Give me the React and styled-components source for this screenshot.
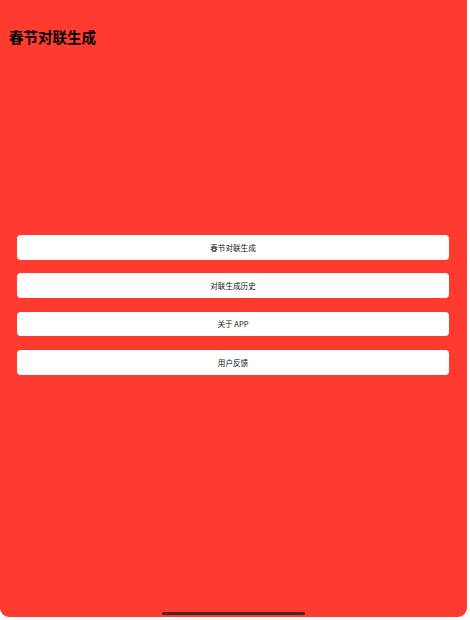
import React from 'react';
import styled, { createGlobalStyle } from 'styled-components';

const GlobalStyle = createGlobalStyle`
  html, body {
    margin: 0;
    padding: 0;
    background: #ffffff;
  }
  body {
    font-family: "Noto Sans CJK SC", "Liberation Sans", sans-serif;
  }
`

const Screen = styled.div`
  position: relative;
  width: 467px;
  height: 617px;
  box-sizing: border-box;
  padding: 30px 18px 0 17px;
  background: #ff3b30;
  border-radius: 0 0 9px 9px;
  overflow: hidden;
`

const Title = styled.h1`
  margin: 0 0 0 -8px;
  font-size: 14.5px;
  line-height: 14.5px;
  font-weight: 700;
  color: #000;
`

const Menu = styled.div`
  display: flex;
  flex-direction: column;
  gap: 13.5px;
  margin-top: 190.5px;
`

const MenuButton = styled.button`
  display: flex;
  align-items: center;
  justify-content: center;
  height: 24.8px;
  padding: 0;
  border: none;
  border-radius: 4px;
  background: #ffffff;
  color: #111;
  font-family: "Noto Sans CJK SC", "Liberation Sans", sans-serif;
  font-size: 7.6px;
  cursor: pointer;
`

const HomeIndicator = styled.div`
  position: absolute;
  left: 162px;
  bottom: 2px;
  width: 143px;
  height: 3.5px;
  border-radius: 2px;
  background: #4d2422;
`

const items = ['春节对联生成', '对联生成历史', '关于 APP', '用户反馈']

const App = () => (
  <>
    <GlobalStyle />
    <Screen>
      <Title>春节对联生成</Title>
      <Menu>
        {items.map(label => (
          <MenuButton key={label}>{label}</MenuButton>
        ))}
      </Menu>
      <HomeIndicator />
    </Screen>
  </>
)

export default App
